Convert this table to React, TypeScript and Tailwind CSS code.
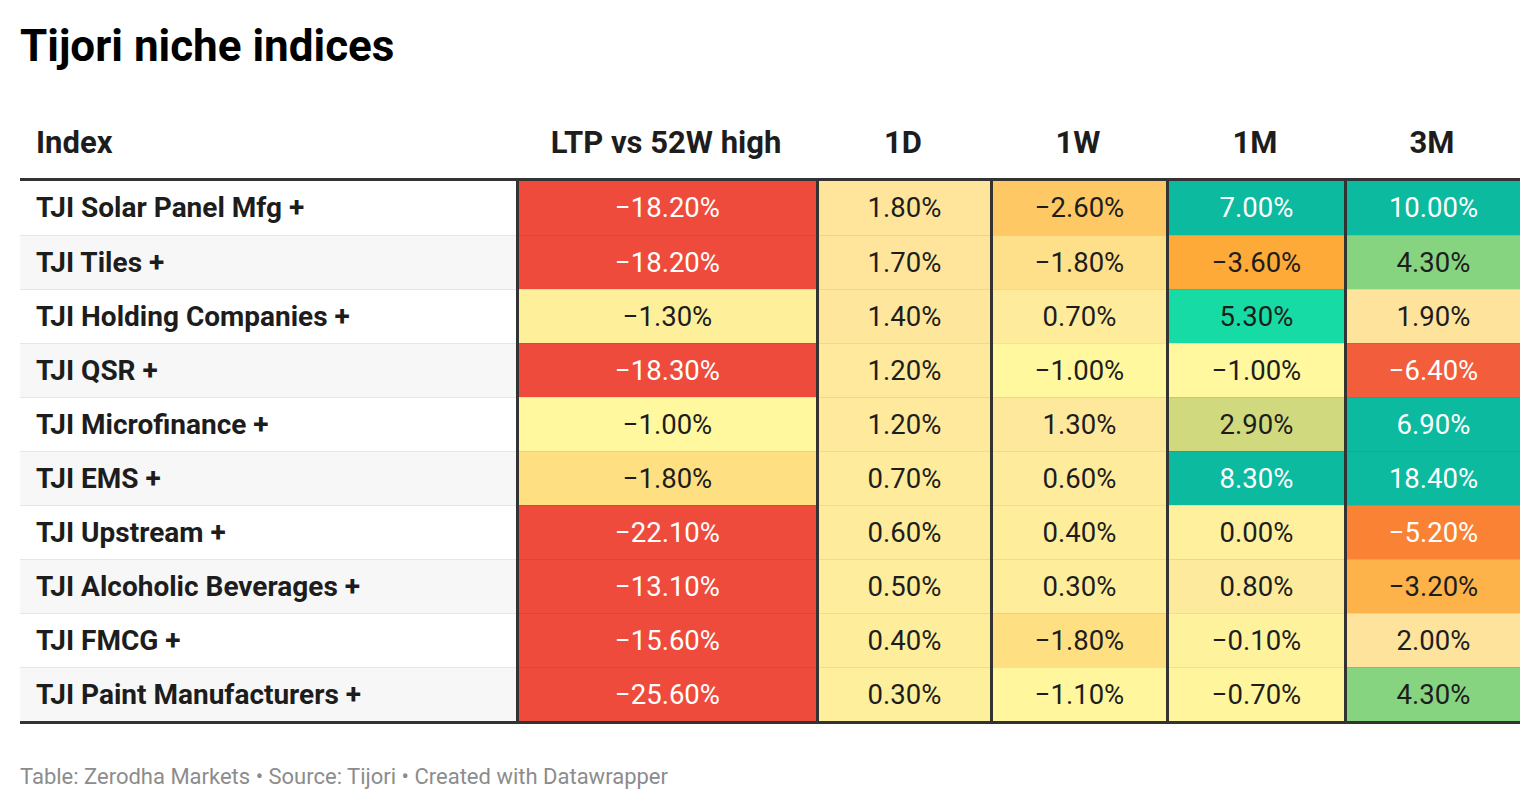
import React from 'react';

type Cell = { v: string; bg: string; light?: boolean };
type Row = { name: string; cells: Cell[] };

const RED = 'bg-[#ef4b3c]';
const TEAL = 'bg-[#0bba9f]';

const rows: Row[] = [
  {
    name: 'TJI Solar Panel Mfg +',
    cells: [
      { v: '−18.20%', bg: RED, light: true },
      { v: '1.80%', bg: 'bg-[#fee59b]' },
      { v: '−2.60%', bg: 'bg-[#fec864]' },
      { v: '7.00%', bg: TEAL, light: true },
      { v: '10.00%', bg: TEAL, light: true },
    ],
  },
  {
    name: 'TJI Tiles +',
    cells: [
      { v: '−18.20%', bg: RED, light: true },
      { v: '1.70%', bg: 'bg-[#fee59b]' },
      { v: '−1.80%', bg: 'bg-[#fee08a]' },
      { v: '−3.60%', bg: 'bg-[#fdaa38]' },
      { v: '4.30%', bg: 'bg-[#86d480]' },
    ],
  },
  {
    name: 'TJI Holding Companies +',
    cells: [
      { v: '−1.30%', bg: 'bg-[#fef09a]' },
      { v: '1.40%', bg: 'bg-[#fee79c]' },
      { v: '0.70%', bg: 'bg-[#feec9c]' },
      { v: '5.30%', bg: 'bg-[#17dba4]' },
      { v: '1.90%', bg: 'bg-[#fee39d]' },
    ],
  },
  {
    name: 'TJI QSR +',
    cells: [
      { v: '−18.30%', bg: RED, light: true },
      { v: '1.20%', bg: 'bg-[#fee99c]' },
      { v: '−1.00%', bg: 'bg-[#fff89e]' },
      { v: '−1.00%', bg: 'bg-[#fff89e]' },
      { v: '−6.40%', bg: 'bg-[#f25d3b]', light: true },
    ],
  },
  {
    name: 'TJI Microfinance +',
    cells: [
      { v: '−1.00%', bg: 'bg-[#fff89e]' },
      { v: '1.20%', bg: 'bg-[#fee99c]' },
      { v: '1.30%', bg: 'bg-[#fee89c]' },
      { v: '2.90%', bg: 'bg-[#d0d97e]' },
      { v: '6.90%', bg: TEAL, light: true },
    ],
  },
  {
    name: 'TJI EMS +',
    cells: [
      { v: '−1.80%', bg: 'bg-[#fee083]' },
      { v: '0.70%', bg: 'bg-[#feec9c]' },
      { v: '0.60%', bg: 'bg-[#feec9c]' },
      { v: '8.30%', bg: TEAL, light: true },
      { v: '18.40%', bg: TEAL, light: true },
    ],
  },
  {
    name: 'TJI Upstream +',
    cells: [
      { v: '−22.10%', bg: RED, light: true },
      { v: '0.60%', bg: 'bg-[#feec9c]' },
      { v: '0.40%', bg: 'bg-[#feee9c]' },
      { v: '0.00%', bg: 'bg-[#fff09d]' },
      { v: '−5.20%', bg: 'bg-[#f98234]', light: true },
    ],
  },
  {
    name: 'TJI Alcoholic Beverages +',
    cells: [
      { v: '−13.10%', bg: RED, light: true },
      { v: '0.50%', bg: 'bg-[#feed9c]' },
      { v: '0.30%', bg: 'bg-[#feee9c]' },
      { v: '0.80%', bg: 'bg-[#feea9c]' },
      { v: '−3.20%', bg: 'bg-[#fdb349]' },
    ],
  },
  {
    name: 'TJI FMCG +',
    cells: [
      { v: '−15.60%', bg: RED, light: true },
      { v: '0.40%', bg: 'bg-[#feee9c]' },
      { v: '−1.80%', bg: 'bg-[#fee083]' },
      { v: '−0.10%', bg: 'bg-[#fff29d]' },
      { v: '2.00%', bg: 'bg-[#fee39d]' },
    ],
  },
  {
    name: 'TJI Paint Manufacturers +',
    cells: [
      { v: '−25.60%', bg: RED, light: true },
      { v: '0.30%', bg: 'bg-[#feef9c]' },
      { v: '−1.10%', bg: 'bg-[#fff69d]' },
      { v: '−0.70%', bg: 'bg-[#fff59d]' },
      { v: '4.30%', bg: 'bg-[#86d480]' },
    ],
  },
];

const colWidths = ['w-[300px]', 'w-[174px]', 'w-[176px]', 'w-[178px]', 'w-[176px]'];
const headers = ['LTP vs 52W high', '1D', '1W', '1M', '3M'];

export default function App() {
  return (
    <div className="w-[1540px] h-[810px] bg-white px-[20px] pt-[20px] text-[#1d1d1d] font-['Roboto','Liberation_Sans',sans-serif]">
      <h1 className="text-[44px] leading-[52px] font-bold text-black">Tijori niche indices</h1>

      <div className="w-[1500px]">
        {/* header */}
        <div className="flex items-end h-[109px] pb-[17px] border-b-[3px] border-[#333]">
          <div className="w-[496px] pl-[16px] text-[31px] leading-[36px] font-bold">Index</div>
          {headers.map((h, i) => (
            <div key={h} className={`${colWidths[i]} text-center text-[31px] leading-[36px] font-bold`}>
              {h}
            </div>
          ))}
        </div>

        {/* body */}
        <div className="border-b-[3px] border-[#333]">
          {rows.map((r, ri) => (
            <div key={r.name} className="flex h-[54px]">
              <div
                className={`w-[496px] pl-[16px] flex items-center text-[28px] font-bold ${
                  ri % 2 === 1 ? 'bg-[#f7f7f7]' : 'bg-white'
                } ${ri > 0 ? 'border-t border-[#e6e6e6]' : ''}`}
              >
                {r.name}
              </div>
              {r.cells.map((c, ci) => (
                <div
                  key={ci}
                  className={`${colWidths[ci]} border-l-[3px] border-l-[#333] ${c.bg} text-[27.5px] ${
                    c.light ? 'text-white' : 'text-[#1d1d1d]'
                  }`}
                >
                  <div
                    className={`w-full h-full flex items-center justify-center ${
                      ri > 0 ? 'border-t border-black/[0.07]' : ''
                    }`}
                  >
                    {c.v}
                  </div>
                </div>
              ))}
            </div>
          ))}
        </div>

        <p className="mt-[40px] text-[22px] leading-[26px] text-[#8c8c8c]">
          Table: Zerodha Markets • Source: Tijori • Created with Datawrapper
        </p>
      </div>
    </div>
  );
}
